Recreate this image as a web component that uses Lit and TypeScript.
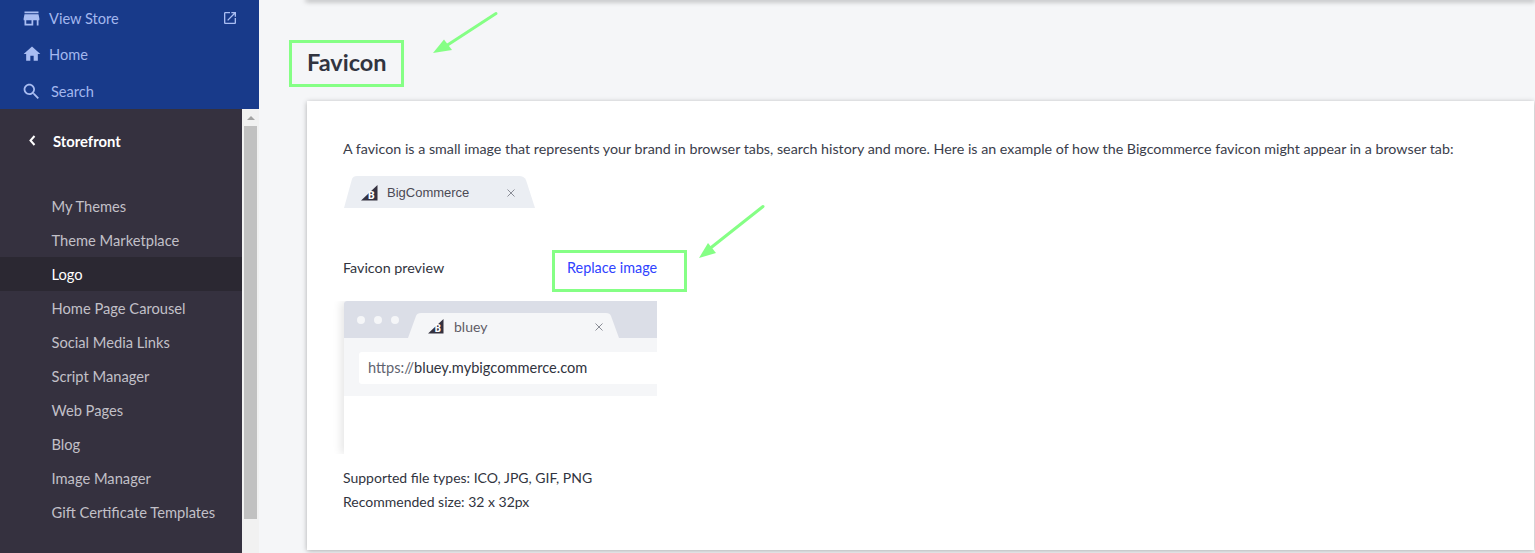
import { LitElement, html, css, svg } from "lit";
import { customElement } from "lit/decorators.js";

const NAV = ["My Themes", "Theme Marketplace", "Logo", "Home Page Carousel", "Social Media Links", "Script Manager", "Web Pages", "Blog", "Image Manager", "Gift Certificate Templates"];

const bcLogo = () => html`<svg class="logo" viewBox="0 0 17 16"><path fill="#34313f" d="M16.500 0 0 15.500h16.500z"/><text x="6.800" y="14" font-family="Noto Sans" font-size="10.500" font-weight="700" fill="#fff">B</text></svg>`;
const close = () => html`<svg class="x" viewBox="0 0 8 8"><path d="M.5.5l7 7M7.500.5l-7 7"/></svg>`;

@customElement("app-root")
export class AppRoot extends LitElement {
  static styles = css`
    :host { display: flex; width: 1535px; height: 553px; overflow: hidden; position: relative; background: #f5f6f8; font-family: "Lato", "Noto Sans", sans-serif; font-size: 14px; color: #313440; }
    .side { width: 259px; flex: none; display: flex; flex-direction: column; background: #35313f; }
    .top { height: 109px; background: #183a8a; color: #a3b7ee; flex: none; display: flex; flex-direction: column; font-size: 14.6px; }
    .top a { height: 36.500px; display: flex; align-items: center; padding-left: 21px; gap: 7px; }
    .top a:first-child { height: 36px; }
    .top svg { width: 21px; height: 21px; fill: #a9bdf2; flex: none; }
    .top .ext { margin-left: auto; margin-right: 21px; width: 16px; height: 16px; }
    .top .home { width: 20px; height: 20px; margin-left: 1px; }
    .top .find { gap: 9px; padding-top: 1px; height: 35.500px; }
    .lower { flex: 1; display: flex; min-height: 0; }
    .nav { flex: 1; padding-top: 15px; }
    .back { height: 33px; display: flex; align-items: center; padding-left: 29px; color: #fff; font-weight: 700; font-size: 14.800px; gap: 17px; }
    .back svg { width: 7px; height: 11px; }
    ul { list-style: none; margin: 32px 0 0; padding: 0; }
    li { height: 34px; line-height: 34px; padding-left: 51.500px; color: #c2c0c8; font-size: 14.700px; }
    li.on { background: #2b2832; color: #fff; }
    .sb { width: 17px; background: #f1f1f1; flex: none; display: flex; flex-direction: column; align-items: center; padding-top: 7px; box-sizing: border-box; }
    .sb i { width: 0; height: 0; border: 4px solid transparent; border-top: 0; border-bottom: 4px solid #a3a3a3; margin-bottom: 6px; }
    .sb b { display: block; width: 13px; height: 393px; background: #c1c1c1; }
    .main { flex: 1; min-width: 0; padding-left: 48px; display: flex; flex-direction: column; }
    .prev { height: 0; box-shadow: 0 0 5px 1.500px rgba(0,0,0,.35); flex: none; margin-right: 1px; }
    h1 { margin: 0; height: 101px; line-height: 124px; font-size: 23.500px; font-weight: 700; color: #313440; flex: none; box-sizing: border-box; }
    .card { background: #fff; margin-right: 1px; height: 449px; box-sizing: border-box; padding: 35px 36px 0; box-shadow: 0 1px 5px rgba(0,0,0,.3); flex: none; }
    p { margin: 0; line-height: 24px; }
    .intro { font-size: 14.280px; white-space: nowrap; color: #3a3d4a; line-height: 25px; }
    .tab { margin: 15px 0 0 1px; width: 191px; height: 32px; background: #ebeef3; clip-path: path("M0 32 L8 3 Q9 0 13 0 H175 Q180 0 182 4 L191 32Z"); display: flex; align-items: center; padding: 1px 0 0 17px; box-sizing: border-box; font-family: "Liberation Sans", sans-serif; font-size: 13px; color: #4b4a55; gap: 9px; }
    .logo { width: 17px; height: 16px; flex: none; }
    .x { width: 8px; height: 8px; stroke: #8a8d96; stroke-width: 1; fill: none; flex: none; }
    .tab .x { margin-left: 29px; }
    .row { display: flex; margin-top: 48px; line-height: 24px; font-size: 14.300px; }
    .row span { width: 224px; }
    .row a { color: #2f43ff; font-size: 14.400px; }
    .browser { margin: 21px 0 0 1px; width: 313px; height: 153px; background: #fff; box-shadow: -3px 0 8px rgba(0,0,0,.1); clip-path: inset(0 0 0 -12px); border-top-left-radius: 3px; }
    .chrome { height: 37px; background: #dbdee7; display: flex; border-top-left-radius: 3px; overflow: hidden; }
    .dots { display: flex; gap: 9px; padding: 15px 0 0 13px; }
    .dots i { width: 8px; height: 8px; background: #f5f6f8; border-radius: 50%; }
    .btab { margin: 12px 0 0 9px; width: 211px; height: 25px; background: #f5f6f8; clip-path: path("M0 25 L8 3 Q9 0 13 0 H198 Q202 0 203 3 L211 25Z"); display: flex; align-items: center; padding: 2px 0 0 20px; box-sizing: border-box; font-size: 14px; color: #5f5c66; gap: 10px; }
    .btab .logo { width: 16px; height: 15px; }
    .btab .x { margin-left: 98px; }
    .addr { background: #f5f6f8; height: 58px; padding: 14px 0 0 15px; box-sizing: border-box; }
    .addr div { background: #fff; height: 32px; line-height: 31px; padding-left: 9px; border-radius: 3px 0 0 3px; color: #313440; font-size: 14.600px; }
    .addr em { font-style: normal; color: #5f6470; }
    .req { margin-top: 12px; font-size: 14px; }
    .mark { position: absolute; border: 3px solid #85ff85; box-sizing: border-box; }
    .m1 { left: 289px; top: 40px; width: 115px; height: 47px; }
    .m2 { left: 552px; top: 250px; width: 135px; height: 42px; }
    .arrows { position: absolute; left: 0; top: 0; width: 1535px; height: 553px; pointer-events: none; }
  `;
  render() {
    return html`
      <div class="side">
        <div class="top">
          <a><svg viewBox="0 0 24 24"><path d="M20 4H4v2h16V4zm1 10v-2l-1-5H4l-1 5v2h1v6h10v-6h4v6h2v-6h1zm-9 4H6v-4h6v4z"/></svg>View Store
            <svg class="ext" viewBox="0 0 24 24"><path d="M19 19H5V5h7V3H5c-1.110 0-2 .9-2 2v14c0 1.100.89 2 2 2h14c1.100 0 2-.9 2-2v-7h-2v7zM14 3v2h3.590l-9.830 9.830 1.410 1.410L19 6.410V10h2V3h-7z"/></svg></a>
          <a><svg class="home" viewBox="0 0 24 24"><path d="M10 20v-6h4v6h5v-8h3L12 3 2 12h3v8z"/></svg>Home</a>
          <a class="find"><svg viewBox="0 0 24 24"><path d="M15.500 14h-.79l-.28-.27C15.410 12.590 16 11.110 16 9.500 16 5.910 13.090 3 9.500 3S3 5.910 3 9.500 5.910 16 9.500 16c1.610 0 3.090-.59 4.230-1.570l.27.28v.79l5 4.990L20.490 19l-4.990-5zm-6 0C7.010 14 5 11.990 5 9.500S7.010 5 9.500 5 14 7.010 14 9.500 11.990 14 9.500 14z"/></svg>Search</a>
        </div>
        <div class="lower">
          <div class="nav">
            <div class="back"><svg viewBox="0 0 7 11"><path d="M5.500 1 1.500 5.500l4 4.500" fill="none" stroke="#fff" stroke-width="2"/></svg>Storefront</div>
            <ul>${NAV.map((n) => html`<li class=${n === "Logo" ? "on" : ""}>${n}</li>`)}</ul>
          </div>
          <div class="sb"><i></i><b></b></div>
        </div>
      </div>
      <div class="main">
        <div class="prev"></div>
        <h1>Favicon</h1>
        <div class="card">
          <p class="intro">A favicon is a small image that represents your brand in browser tabs, search history and more. Here is an example of how the Bigcommerce favicon might appear in a browser tab:</p>
          <div class="tab">${bcLogo()}<span>BigCommerce</span>${close()}</div>
          <div class="row"><span>Favicon preview</span><a>Replace image</a></div>
          <div class="browser">
            <div class="chrome">
              <div class="dots"><i></i><i></i><i></i></div>
              <div class="btab">${bcLogo()}<span>bluey</span>${close()}</div>
            </div>
            <div class="addr"><div><em>https://</em>bluey.mybigcommerce.com</div></div>
          </div>
          <p class="req">Supported file types: ICO, JPG, GIF, PNG<br />Recommended size: 32 x 32px</p>
        </div>
      </div>
      <div class="mark m1"></div>
      <div class="mark m2"></div>
      <svg class="arrows" viewBox="0 0 1535 553">
        ${svg`<path d="M496 13.500 446 46" stroke="#85ff85" stroke-width="3" fill="none" stroke-linecap="round"/><path d="M433 53 444 39.500 452 50z" fill="#85ff85"/>
        <path d="M763 206.500 708 250" stroke="#85ff85" stroke-width="3" fill="none" stroke-linecap="round"/><path d="M699 258 708 243 716 253z" fill="#85ff85"/>`}
      </svg>
    `;
  }
}
